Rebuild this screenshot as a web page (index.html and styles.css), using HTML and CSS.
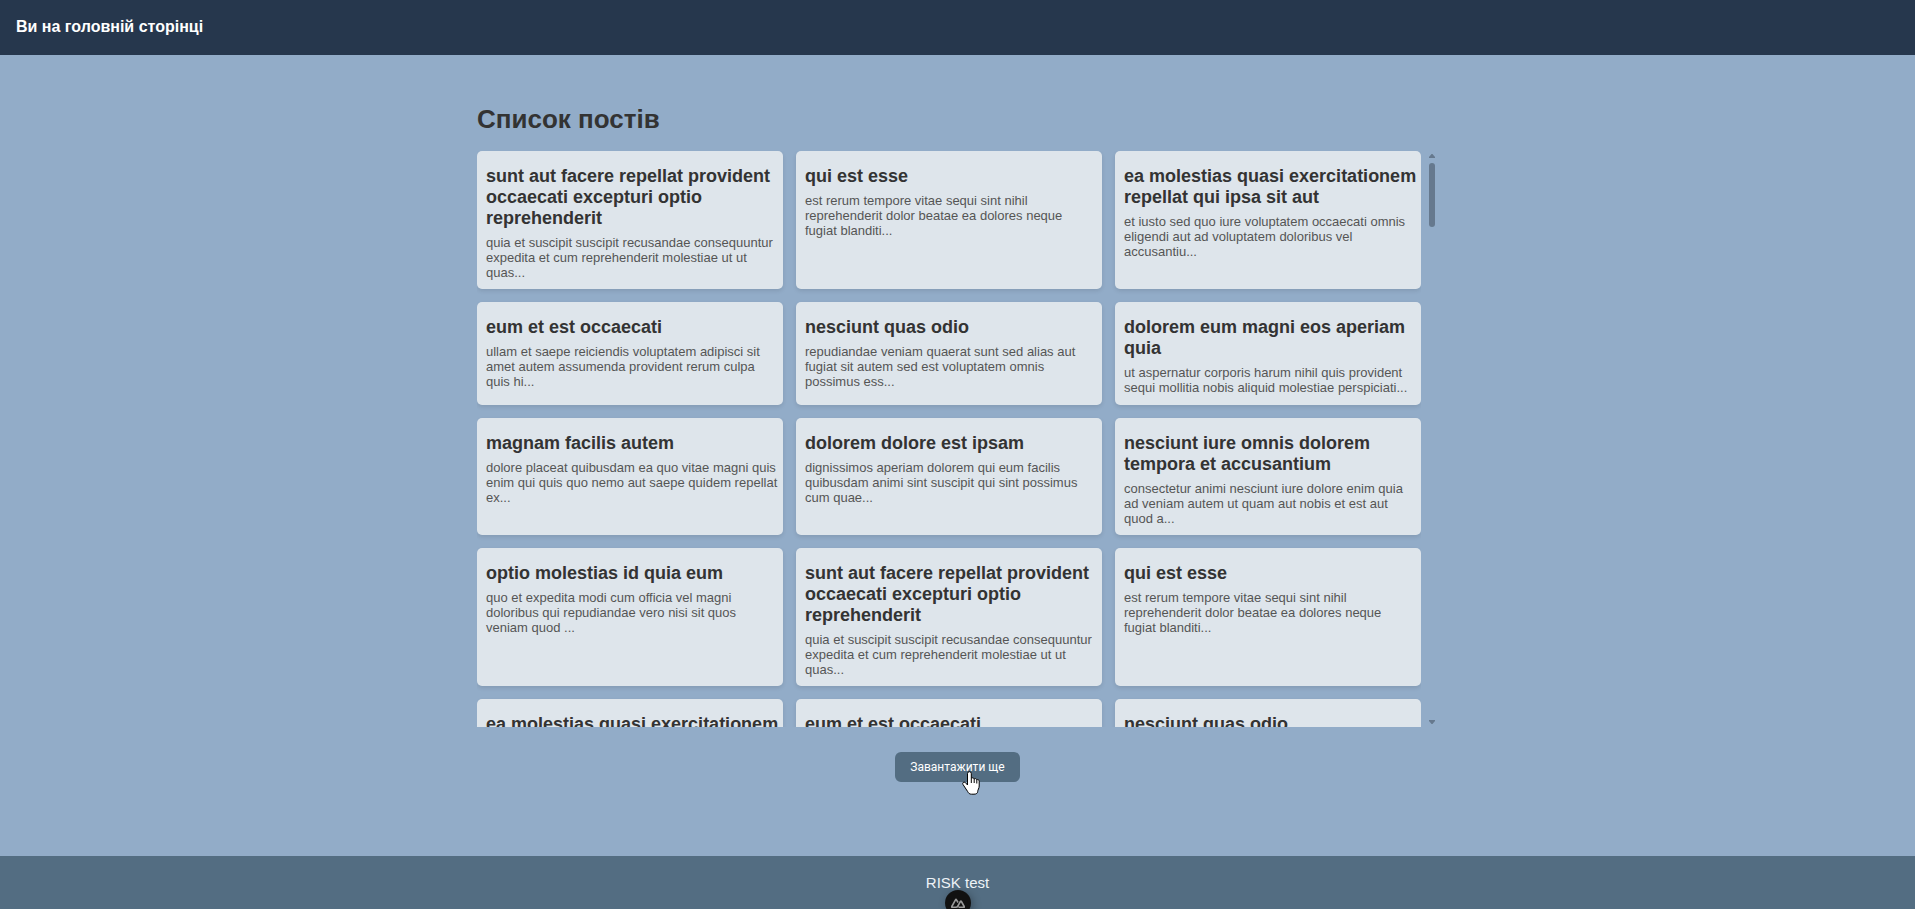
FILE: index.html
```html
<!DOCTYPE html>
<html lang="uk">
<head>
<meta charset="utf-8">
<title>Список постів</title>
<link rel="stylesheet" href="styles.css">
</head>
<body>
<header class="header"><p class="header-title">Ви на головній сторінці</p></header>
<main class="main">
  <h1 class="page-title">Список постів</h1>
  <div class="list-wrap">
    <div class="posts">
      <article class="card"><h2>sunt aut facere repellat provident occaecati excepturi optio reprehenderit</h2><p>quia et suscipit suscipit recusandae consequuntur expedita et cum reprehenderit molestiae ut ut quas...</p></article>
      <article class="card"><h2>qui est esse</h2><p>est rerum tempore vitae sequi sint nihil reprehenderit dolor beatae ea dolores neque fugiat blanditi...</p></article>
      <article class="card"><h2>ea molestias quasi exercitationem repellat qui ipsa sit aut</h2><p>et iusto sed quo iure voluptatem occaecati omnis eligendi aut ad voluptatem doloribus vel accusantiu...</p></article>
      <article class="card"><h2>eum et est occaecati</h2><p>ullam et saepe reiciendis voluptatem adipisci sit amet autem assumenda provident rerum culpa quis hi...</p></article>
      <article class="card"><h2>nesciunt quas odio</h2><p>repudiandae veniam quaerat sunt sed alias aut fugiat sit autem sed est voluptatem omnis possimus ess...</p></article>
      <article class="card"><h2>dolorem eum magni eos aperiam quia</h2><p>ut aspernatur corporis harum nihil quis provident sequi mollitia nobis aliquid molestiae perspiciati...</p></article>
      <article class="card"><h2>magnam facilis autem</h2><p>dolore placeat quibusdam ea quo vitae magni quis enim qui quis quo nemo aut saepe quidem repellat ex...</p></article>
      <article class="card"><h2>dolorem dolore est ipsam</h2><p>dignissimos aperiam dolorem qui eum facilis quibusdam animi sint suscipit qui sint possimus cum quae...</p></article>
      <article class="card"><h2>nesciunt iure omnis dolorem tempora et accusantium</h2><p>consectetur animi nesciunt iure dolore enim quia ad veniam autem ut quam aut nobis et est aut quod a...</p></article>
      <article class="card"><h2>optio molestias id quia eum</h2><p>quo et expedita modi cum officia vel magni doloribus qui repudiandae vero nisi sit quos veniam quod ...</p></article>
      <article class="card"><h2>sunt aut facere repellat provident occaecati excepturi optio reprehenderit</h2><p>quia et suscipit suscipit recusandae consequuntur expedita et cum reprehenderit molestiae ut ut quas...</p></article>
      <article class="card"><h2>qui est esse</h2><p>est rerum tempore vitae sequi sint nihil reprehenderit dolor beatae ea dolores neque fugiat blanditi...</p></article>
      <article class="card"><h2>ea molestias quasi exercitationem</h2></article>
      <article class="card"><h2>eum et est occaecati</h2></article>
      <article class="card"><h2>nesciunt quas odio</h2></article>
    </div>
    <div class="scrollbar" aria-hidden="true">
      <svg width="6" height="4" viewBox="0 0 6 4"><path d="M2.500 0h1L6 3V4H0V3Z"/></svg>
      <span class="thumb"></span>
      <svg width="6" height="4" viewBox="0 0 6 4"><path d="M0 0H6V1L3.500 4h-1L0 1Z"/></svg>
    </div>
  </div>
  <div class="more">
    <button class="load-more" type="button">Завантажити ще</button>
    <svg class="pointer" width="18" height="24" viewBox="0 0 18 24" aria-hidden="true"><path d="M5.500 14V2.600a1.900 1.900 0 0 1 3.800 0V7.500c.6-1.100 2.600-.9 2.900.5.800-.8 2.400-.4 2.600.8.900-.6 2.400 0 2.400 1.400V15c0 2.500-1.500 3.800-1.500 5.500 0 1.700-1.500 2.700-3.700 2.700H9.500c-2 0-3-1-3.800-2.600L1 13.500c-1-1.500.7-3.100 2.200-2.100Z"/><path d="M9.300 7.500V12M12.200 8V12M14.800 9V12.500"/></svg>
  </div>
</main>
<footer class="footer"><p class="footer-text">RISK test</p>
  <button class="devtools" type="button" aria-label="Nuxt DevTools"><svg width="14" height="10" viewBox="0 0 14 10"><path d="M5 9.200H1.200Q.4 9.200.8 8.500L4.500 1.800Q5 1 5.500 1.800L7 4.500M7.500 9.200H12.800Q13.600 9.200 13.200 8.500L10.400 3.500Q9.900 2.700 9.400 3.500L6.600 8.500Q6.200 9.200 5 9.200"/></svg></button>
</footer>
</body>
</html>
```

FILE: styles.css
```css
* { box-sizing: border-box; }
body {
  margin: 0;
  min-height: 100vh;
  display: flex;
  flex-direction: column;
  background: #92acc8;
  color: #333;
  font-family: "Liberation Sans", Arial, sans-serif;
}
h1, h2, p { margin: 0; }
.header { padding: 15px 16px 17px; background: #26374d; color: #fff; }
.header-title { font-size: 16px; line-height: 23px; font-weight: 700; }
.main {
  flex: 1;
  width: 100%;
  max-width: 961px;
  margin: 0 auto;
  padding-top: 48px;
}
.page-title { font-size: 26px; line-height: 32px; margin-bottom: 16px; }
.list-wrap { display: flex; gap: 6px; }
.posts {
  flex: 1;
  height: 576px;
  overflow-y: auto;
  scrollbar-width: none;
  display: grid;
  grid-template-columns: repeat(3, minmax(0, 1fr));
  grid-auto-rows: max-content;
  align-content: start;
  gap: 13px;
}
.card {
  min-height: 103px;
  padding: 15px 3px 9px 9px;
  border-radius: 5px;
  background: #dee5eb;
  box-shadow: 0 2px 4px rgba(0, 0, 0, 0.1);
}
.card h2 { font-size: 18px; line-height: 21px; margin-bottom: 6px; }
.card p { margin-right: 2px; font-size: 13px; line-height: 15px; color: #555; }
.scrollbar {
  width: 11px;
  padding: 3px 3px 3px 2px;
  display: flex;
  flex-direction: column;
  gap: 5px;
  fill: #66798e;
}
.thumb { height: 64px; border-radius: 3px; background: #66798e; margin-bottom: auto; }
.more { position: relative; display: flex; justify-content: center; padding-top: 25px; }
.load-more {
  height: 30px;
  padding: 0 15px;
  border: 0;
  border-radius: 6px;
  background: #536d82;
  color: #fff;
  font: 12px Roboto, sans-serif;
}
.pointer { position: absolute; left: calc(50% + 4px); top: 44px; fill: #fff; stroke: #000; stroke-width: 1; }
.footer {
  position: relative;
  height: 53px;
  padding-top: 18px;
  overflow: hidden;
  background: #536d82;
  color: #eef3f7;
  text-align: center;
}
.footer-text { font-size: 15px; line-height: 18px; }
.devtools {
  position: absolute;
  left: calc(50% - 13px);
  top: 34px;
  width: 26px;
  height: 26px;
  padding: 0;
  border: 0;
  border-radius: 50%;
  background: #111;
  box-shadow: 2px 2px 8px rgba(0, 0, 0, 0.3);
  display: flex;
  justify-content: center;
  align-items: center;
}
.devtools svg { fill: none; stroke: #999; stroke-width: 1.6; }
```
